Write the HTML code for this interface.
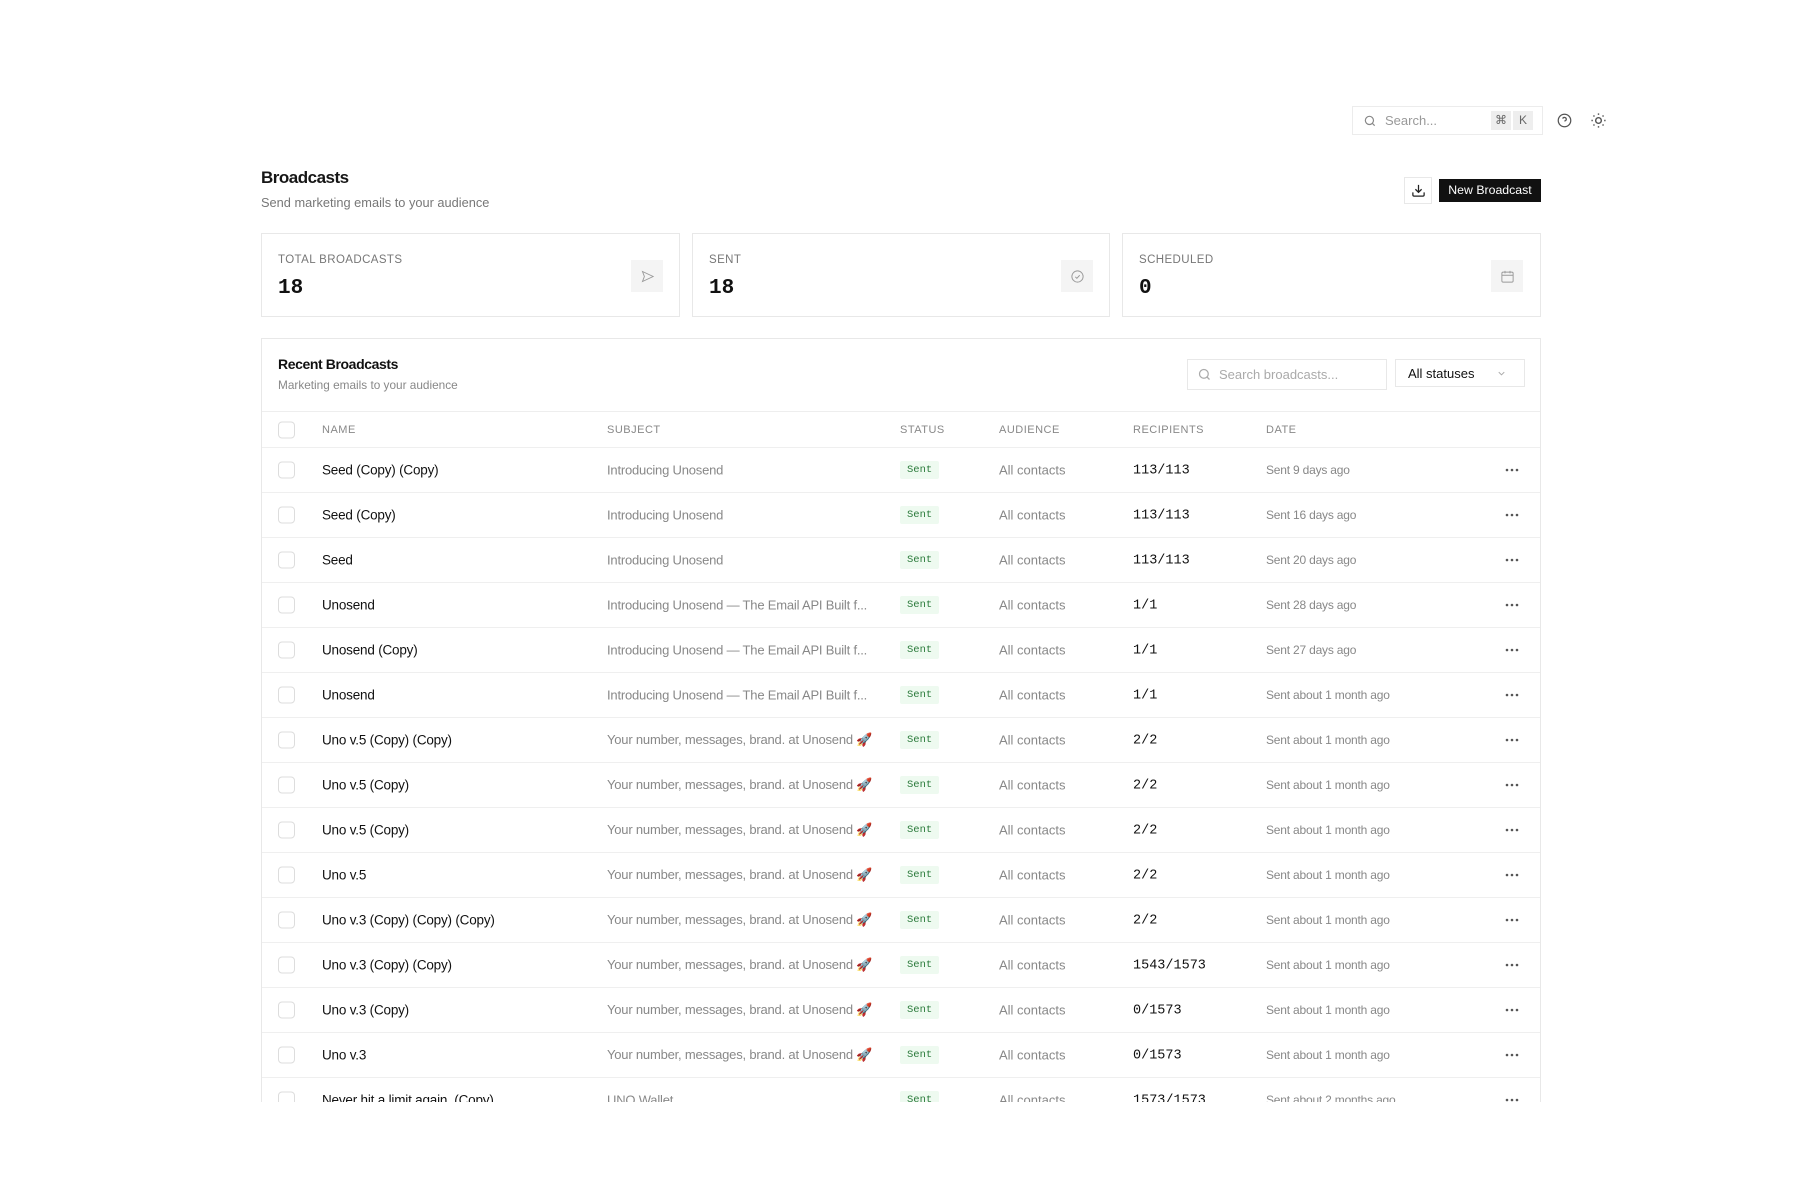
<!DOCTYPE html>
<html><head><meta charset="utf-8"><style>
*{box-sizing:border-box;margin:0;padding:0}
body{width:1803px;height:1202px;background:#fff;font-family:"Liberation Sans",sans-serif;color:#111;position:relative;overflow:hidden}
.a{position:absolute}
.mono{font-family:"Liberation Mono",monospace}
.card{border:1px solid #e8e8e8;background:#fff}
.lbl{font-size:11.5px;color:#777;letter-spacing:.4px}
.num{font-size:21px;font-weight:bold}
.ib{width:32px;height:32px;background:#f4f4f4;display:flex;align-items:center;justify-content:center}
.row{position:absolute;left:0;width:1280px;height:45px;border-bottom:1px solid #efefef;font-size:13.5px}
.row>*{position:absolute;top:50%;transform:translateY(-50%);white-space:nowrap}
.cb{width:17px;height:17px;border:1.5px solid #ddd;border-radius:4px;left:16px}
.badge{left:638px;background:#eefaf0;color:#2a7a3a;font-family:"Liberation Mono",monospace;font-size:10.5px;padding:3px 7px;border-radius:2px}
.g{color:#888}
.dots{left:1243px;width:14px;height:4px}
</style></head><body>

<div class="a card" style="left:1352px;top:106px;width:191px;height:29px;border-color:#ececec"></div>
<svg class="a" style="left:1363px;top:114px" width="14" height="14" viewBox="0 0 24 24" fill="none" stroke="#888" stroke-width="2"><circle cx="11" cy="11" r="7"/><path d="M20 20l-4-4"/></svg>
<div class="a" style="left:1385px;top:113px;font-size:13px;color:#999">Search...</div>
<div class="a" style="left:1491px;top:111px;width:20px;height:19px;background:#eee;font-size:12px;color:#666;text-align:center;line-height:19px">⌘</div>
<div class="a" style="left:1513px;top:111px;width:20px;height:19px;background:#eee;font-size:12px;color:#666;text-align:center;line-height:19px">K</div>
<svg class="a" style="left:1557px;top:113px" width="15" height="15" viewBox="0 0 24 24" fill="none" stroke="#555" stroke-width="2"><circle cx="12" cy="12" r="10"/><path d="M9.1 9a3 3 0 0 1 5.8 1c0 2-3 3-3 3"/><path d="M12 17h.01"/></svg>
<svg class="a" style="left:1590px;top:112px" width="17" height="17" viewBox="0 0 24 24" fill="none" stroke="#555" stroke-width="2"><circle cx="12" cy="12" r="4"/><path d="M12 2v2M12 20v2M4.9 4.9l1.4 1.4M17.7 17.7l1.4 1.4M2 12h2M20 12h2M6.3 17.7l-1.4 1.4M19.1 4.9l-1.4 1.4"/></svg>

<div class="a" style="left:261px;top:168px;font-size:17px;font-weight:bold;letter-spacing:-.5px;color:#161616">Broadcasts</div>
<div class="a" style="left:261px;top:195px;font-size:12.8px;color:#777">Send marketing emails to your audience</div>
<div class="a card" style="left:1404px;top:177px;width:28px;height:27px;display:flex;align-items:center;justify-content:center"><svg width="15" height="15" viewBox="0 0 24 24" fill="none" stroke="#222" stroke-width="2"><path d="M12 3v12M7 10l5 5 5-5M3 15v4a2 2 0 0 0 2 2h14a2 2 0 0 0 2-2v-4"/></svg></div>
<div class="a" style="left:1439px;top:179px;width:102px;height:23px;background:#111;color:#fff;font-size:12.3px;text-align:center;line-height:23px">New Broadcast</div>

<div class="a card" style="left:261px;top:233px;width:419px;height:84px"></div>
<div class="a card" style="left:692px;top:233px;width:418px;height:84px"></div>
<div class="a card" style="left:1122px;top:233px;width:419px;height:84px"></div>
<div class="a lbl" style="left:278px;top:254px">TOTAL BROADCASTS</div>
<div class="a lbl" style="left:709px;top:254px">SENT</div>
<div class="a lbl" style="left:1139px;top:254px">SCHEDULED</div>
<div class="a num mono" style="left:278px;top:277px">18</div>
<div class="a num mono" style="left:709px;top:277px">18</div>
<div class="a num mono" style="left:1139px;top:277px">0</div>
<div class="a ib" style="left:631px;top:260px"><svg width="15" height="15" viewBox="0 0 24 24" fill="none" stroke="#999" stroke-width="1.5"><path d="M4 4l17 8-17 8 3-8z"/></svg></div>
<div class="a ib" style="left:1061px;top:260px"><svg width="15" height="15" viewBox="0 0 24 24" fill="none" stroke="#999" stroke-width="1.5"><circle cx="12" cy="12" r="9"/><path d="M8.5 12.5l2.5 2.5 4.5-5"/></svg></div>
<div class="a ib" style="left:1491px;top:260px"><svg width="15" height="15" viewBox="0 0 24 24" fill="none" stroke="#999" stroke-width="1.5"><rect x="3" y="5" width="18" height="16" rx="2"/><path d="M8 3v4M16 3v4M3 10h18"/></svg></div>

<div class="a" style="left:261px;top:338px;width:1280px;height:764px;overflow:hidden;border:1px solid #e8e8e8;border-bottom:none">
  <div class="a" style="left:16px;top:17px;font-size:14px;font-weight:bold;letter-spacing:-.4px">Recent Broadcasts</div>
  <div class="a" style="left:16px;top:39px;font-size:11.8px;color:#888">Marketing emails to your audience</div>
  <div class="a" style="left:925px;top:20px;width:200px;height:31px;border:1px solid #e8e8e8"></div>
  <svg class="a" style="left:935px;top:28px" width="15" height="15" viewBox="0 0 24 24" fill="none" stroke="#aaa" stroke-width="2"><circle cx="11" cy="11" r="7"/><path d="M20 20l-4-4"/></svg>
  <div class="a" style="left:957px;top:28px;font-size:13px;color:#aaa">Search broadcasts...</div>
  <div class="a" style="left:1133px;top:20px;width:130px;height:28px;border:1px solid #e8e8e8"></div>
  <div class="a" style="left:1146px;top:27px;font-size:13px;color:#111">All statuses</div>
  <svg class="a" style="left:1234px;top:29px" width="11" height="11" viewBox="0 0 24 24" fill="none" stroke="#aaa" stroke-width="2"><path d="M6 9l6 6 6-6"/></svg>
  <div class="a" style="left:0;top:72px;width:1280px;border-top:1px solid #eee"></div>
  <div class="row" style="top:73px;height:36px;font-size:11px;color:#888;letter-spacing:.5px">
    <div class="cb"></div><div style="left:60px">NAME</div><div style="left:345px">SUBJECT</div><div style="left:638px">STATUS</div><div style="left:737px">AUDIENCE</div><div style="left:871px">RECIPIENTS</div><div style="left:1004px">DATE</div>
  </div>
  <div id="rows"></div>
</div>

<script>
const d=[
["Seed (Copy) (Copy)","Introducing Unosend","113/113","Sent 9 days ago"],
["Seed (Copy)","Introducing Unosend","113/113","Sent 16 days ago"],
["Seed","Introducing Unosend","113/113","Sent 20 days ago"],
["Unosend","Introducing Unosend — The Email API Built f...","1/1","Sent 28 days ago"],
["Unosend (Copy)","Introducing Unosend — The Email API Built f...","1/1","Sent 27 days ago"],
["Unosend","Introducing Unosend — The Email API Built f...","1/1","Sent about 1 month ago"],
["Uno v.5 (Copy) (Copy)","Your number, messages, brand. at Unosend 🚀","2/2","Sent about 1 month ago"],
["Uno v.5 (Copy)","Your number, messages, brand. at Unosend 🚀","2/2","Sent about 1 month ago"],
["Uno v.5 (Copy)","Your number, messages, brand. at Unosend 🚀","2/2","Sent about 1 month ago"],
["Uno v.5","Your number, messages, brand. at Unosend 🚀","2/2","Sent about 1 month ago"],
["Uno v.3 (Copy) (Copy) (Copy)","Your number, messages, brand. at Unosend 🚀","2/2","Sent about 1 month ago"],
["Uno v.3 (Copy) (Copy)","Your number, messages, brand. at Unosend 🚀","1543/1573","Sent about 1 month ago"],
["Uno v.3 (Copy)","Your number, messages, brand. at Unosend 🚀","0/1573","Sent about 1 month ago"],
["Uno v.3","Your number, messages, brand. at Unosend 🚀","0/1573","Sent about 1 month ago"],
["Never hit a limit again. (Copy)","UNO Wallet","1573/1573","Sent about 2 months ago"]];
let h="";
d.forEach((r,i)=>{h+=`<div class="row" style="top:${109+45*i}px"><div class="cb"></div><div style="left:60px;letter-spacing:-.2px">${r[0]}</div><div class="g" style="left:345px;font-size:13px;letter-spacing:-.2px">${r[1]}</div><div class="badge">Sent</div><div class="g" style="left:737px;font-size:13px">All contacts</div><div class="mono" style="left:871px;font-size:13.5px;margin-top:1px">${r[2]}</div><div class="g" style="left:1004px;font-size:12px;letter-spacing:-.2px">${r[3]}</div><svg class="dots" viewBox="0 0 14 4"><circle cx="2" cy="2" r="1.3" fill="#555"/><circle cx="7" cy="2" r="1.3" fill="#555"/><circle cx="12" cy="2" r="1.3" fill="#555"/></svg></div>`});
document.getElementById("rows").innerHTML=h;
</script>
</body></html>
